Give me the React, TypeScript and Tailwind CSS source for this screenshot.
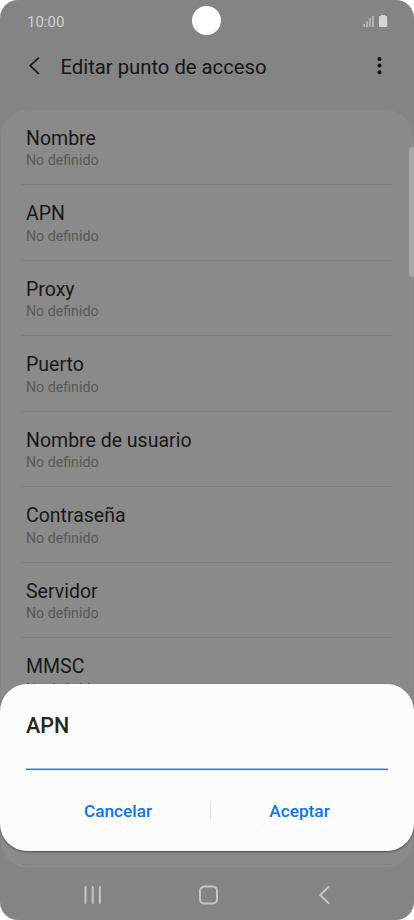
const fields = ["Nombre", "APN", "Proxy", "Puerto", "Nombre de usuario", "Contraseña", "Servidor", "MMSC"];

function StatusBar() {
  return (
    <div className="relative flex h-10 shrink-0 items-center justify-between pl-[27px] pr-[26px] pt-[3px]">
      <span className="text-[15px] leading-5 text-[#d2d2d2]">10:00</span>
      <div className="absolute left-[192px] top-[6px] size-[29px] rounded-full bg-white" />
      <svg className="mb-0.5 h-[14px] w-[25px]" viewBox="0 0 25 14" aria-hidden="true">
        <g fill="#c6c6c6">
          <rect x="0.4" y="10" width="1.4" height="3" />
          <rect x="3.3" y="7.2" width="1.4" height="5.8" />
          <rect x="6.3" y="4.3" width="1.4" height="8.7" />
          <rect x="9.3" y="1.8" width="1.4" height="11.2" />
        </g>
        <path d="M18 1h4v1h1.3a.9.9 0 0 1 .9.9v9.2a.9.9 0 0 1-.9.9h-6.4a.9.9 0 0 1-.9-.9V2.9a.9.9 0 0 1 .9-.9H18z" fill="#d6d6d6" />
      </svg>
    </div>
  );
}

function Header() {
  return (
    <header className="flex h-[69.5px] shrink-0 items-start pl-[28px] pr-[32px] pt-[14px]">
      <button type="button" aria-label="Atrás" className="mt-[2px]">
        <svg className="h-5 w-3" viewBox="0 0 12 20" fill="none" stroke="#161616" strokeWidth="1.7" aria-hidden="true">
          <path d="M10.8 1.6 2.2 9.7l8.6 8.1" />
        </svg>
      </button>
      <h1 className="ml-[20.5px] mt-px flex-1 whitespace-nowrap text-[20.25px] leading-6 text-[#161616]">Editar punto de acceso</h1>
      <button type="button" aria-label="Más opciones" className="mt-[2px]">
        <svg className="h-5 w-[5px]" viewBox="0 0 5 20" fill="#111" aria-hidden="true">
          <circle cx="2.5" cy="3" r="2" />
          <circle cx="2.5" cy="9.6" r="2" />
          <circle cx="2.5" cy="16.2" r="2" />
        </svg>
      </button>
    </header>
  );
}

function FieldRow({ label }: { label?: string }) {
  return (
    <li className="mx-[21px] h-[75.55px] shrink-0 border-b border-[#7e7e7e] pl-1 pt-[17.1px]">
      {label && (
        <>
          <p className="text-[19.5px] leading-6 text-[#181818]">{label}</p>
          <p className="-mt-[0.5px] text-[14.2px] leading-5 text-[#595959]">No definido</p>
        </>
      )}
    </li>
  );
}

function ApnDialog() {
  return (
    <div
      role="dialog"
      aria-label="APN"
      className="absolute inset-x-0 top-[684px] flex h-[167px] flex-col rounded-[27px] bg-[#fcfcfc] px-[26px] pt-[30px] shadow-[0_1px_2px_rgba(0,0,0,0.45)]"
    >
      <h2 className="text-[21.5px] font-medium leading-6 text-[#252525]">APN</h2>
      <div className="mt-[30px] h-[3px] shrink-0 border-y border-b-[#e3effb] border-t-[#93c5f5] bg-[#1f80e0]" />
      <div className="mt-[28px] flex items-center text-[17.25px] font-medium leading-6 text-[#0d76e0]">
        <button type="button" className="w-[184px]">Cancelar</button>
        <div className="-mt-0.5 h-[17px] w-px bg-[#e0e0e0]" />
        <button type="button" className="w-[177px]">Aceptar</button>
      </div>
    </div>
  );
}

function NavBar() {
  return (
    <nav className="flex h-[52px] shrink-0 items-center pt-[2px]">
      <svg className="ml-[84px] h-[18px] w-[18px]" viewBox="0 0 18 18" stroke="#c6c6c6" strokeWidth="2" strokeLinecap="round" aria-hidden="true">
        <path d="M1.5 1v16M8.7 1v16M15.9 1v16" />
      </svg>
      <svg className="ml-[96px] size-5" viewBox="0 0 20 20" fill="none" stroke="#c6c6c6" strokeWidth="2" aria-hidden="true">
        <rect x="2" y="1.5" width="17" height="17" rx="4.5" />
      </svg>
      <svg className="ml-[100px] h-5 w-3" viewBox="0 0 12 20" fill="none" stroke="#c6c6c6" strokeWidth="2" strokeLinecap="round" aria-hidden="true">
        <path d="M10.6 1.9 2.2 10l8.4 8.1" />
      </svg>
    </nav>
  );
}

export default function App() {
  return (
    <div className="h-[920px] w-[414px] bg-white font-['Roboto',sans-serif]">
      <main className="relative flex h-full flex-col overflow-hidden rounded-[18px] bg-[#848484]">
        <StatusBar />
        <Header />
        <ul className="mx-px flex h-[758.5px] shrink-0 flex-col overflow-hidden rounded-[27px] bg-[#8a8a8a]">
          {fields.map((label) => (
            <FieldRow key={label} label={label} />
          ))}
          {/* covered by the dialog, only the last divider shows below it */}
          <FieldRow />
          <FieldRow />
        </ul>
        <NavBar />
        <div className="absolute right-0 top-[147px] h-[130px] w-[5px] rounded-l-[4px] bg-[#a9a9a9]" />
        <ApnDialog />
      </main>
    </div>
  );
}
